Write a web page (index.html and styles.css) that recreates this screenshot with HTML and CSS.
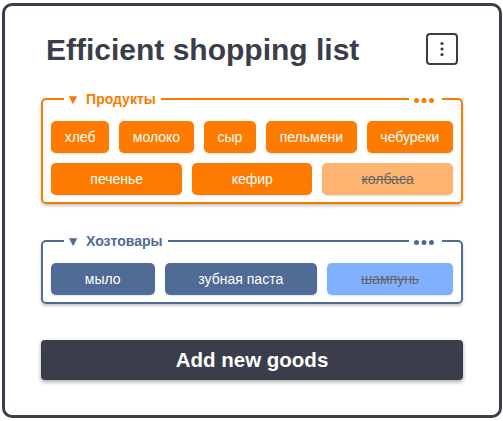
FILE: index.html
```html
<!DOCTYPE html>
<html lang="ru">
<head>
<meta charset="utf-8">
<title>Efficient shopping list</title>
<link rel="stylesheet" href="styles.css">
</head>
<body>
<div class="card">
  <header class="head">
    <h1 class="title">Efficient shopping list</h1>
    <button class="menu" type="button" aria-label="menu">
      <svg width="6" height="16" viewBox="0 0 6 16"><circle cx="3" cy="2.5" r="1.6"/><circle cx="3" cy="8" r="1.6"/><circle cx="3" cy="13.5" r="1.6"/></svg>
    </button>
  </header>

  <fieldset class="group group-orange">
    <legend class="legend"><span class="caret">▼</span>Продукты</legend>
    <span class="dots"><svg width="20" height="5" viewBox="0 0 20 5"><circle cx="2.5" cy="2.5" r="2.5"/><circle cx="10" cy="2.5" r="2.5"/><circle cx="17.5" cy="2.5" r="2.5"/></svg></span>
    <div class="items">
      <button class="item" type="button">хлеб</button>
      <button class="item" type="button">молоко</button>
      <button class="item" type="button">сыр</button>
      <button class="item" type="button">пельмени</button>
      <button class="item" type="button">чебуреки</button>
      <button class="item" type="button">печенье</button>
      <button class="item" type="button">кефир</button>
      <button class="item done" type="button">колбаса</button>
    </div>
  </fieldset>

  <fieldset class="group group-blue">
    <legend class="legend"><span class="caret">▼</span>Хозтовары</legend>
    <span class="dots"><svg width="20" height="5" viewBox="0 0 20 5"><circle cx="2.5" cy="2.5" r="2.5"/><circle cx="10" cy="2.5" r="2.5"/><circle cx="17.5" cy="2.5" r="2.5"/></svg></span>
    <div class="items">
      <button class="item" type="button">мыло</button>
      <button class="item" type="button">зубная паста</button>
      <button class="item done" type="button">шампунь</button>
    </div>
  </fieldset>

  <button class="add" type="button">Add new goods</button>
</div>
</body>
</html>
```
FILE: styles.css
```css
* { box-sizing: border-box; }
html, body { margin: 0; padding: 0; background: #fff; }
body { font-family: "Liberation Sans", Arial, sans-serif; }

.card {
  width: 500px;
  margin: 3px 0 0 2px;
  border: 3px solid #3a3d4a;
  border-radius: 10px;
  padding: 27px 36px 35px 36px;
  display: flex;
  flex-direction: column;
}

.head {
  display: flex;
  align-items: center;
  justify-content: space-between;
  height: 32px;
  padding: 0 5px 0 5px;
}
.title {
  margin: 0;
  font-size: 30px;
  line-height: 32px;
  padding-top: 2px;
  font-weight: bold;
  color: #3a3d4a;
}
.menu {
  width: 32px;
  height: 32px;
  border: 2px solid #3a3d4a;
  border-radius: 4px;
  background: #fff;
  padding: 0;
  display: flex;
  align-items: center;
  justify-content: center;
  fill: #3a3d4a;
}

.group {
  position: relative;
  margin: 26px 0 0 0;
  padding: 14px 8px 7px 8px;
  border: 2px solid;
  border-radius: 5px;
  min-width: 0;
  box-shadow: 0 2px 3px rgba(0, 0, 0, 0.22);
}
.group + .group { margin-top: 29px; }
.group-orange { border-color: #f77b00; color: #f77b00; fill: #f77b00; }
.group-blue { border-color: #4f6b94; color: #4f6b94; fill: #4f6b94; }

.legend {
  display: flex;
  align-items: center;
  height: 16px;
  margin-left: 13px;
  padding: 0 5px 0 5px;
  font-size: 14px;
  line-height: 16px;
  font-weight: bold;
}
.caret {
  font-family: "DejaVu Sans", sans-serif;
  font-size: 10.5px;
  line-height: 16px;
  margin-right: 9px;
}

.dots {
  position: absolute;
  right: 19px;
  top: -9px;
  height: 5px;
  padding: 0 8px 0 5px;
  background: #fff;
  display: flex;
}

.items {
  display: flex;
  flex-wrap: wrap;
  gap: 10px;
}
.item {
  flex: 1 1 auto;
  height: 32px;
  padding: 0 12px;
  border: none;
  border-radius: 5px;
  font-family: "Liberation Sans", Arial, sans-serif;
  font-size: 14px;
  color: #fff;
  box-shadow: 0 1px 2px rgba(0, 0, 0, 0.12);
}
.group-orange .item { background: #ff7b00; }
.group-blue .item { background: #4f6b96; }
.group-orange .item.done { background: #ffb570; color: #666; text-decoration: line-through; }
.group-blue .item.done { background: #80b0ff; color: #666; text-decoration: line-through; }

.add {
  margin-top: 36px;
  height: 40px;
  border: none;
  border-radius: 4px;
  background: #3a3d4a;
  color: #fff;
  font-family: "Liberation Sans", Arial, sans-serif;
  font-size: 20.5px;
  font-weight: bold;
  box-shadow: 0 2px 4px rgba(0, 0, 0, 0.35);
}
```
